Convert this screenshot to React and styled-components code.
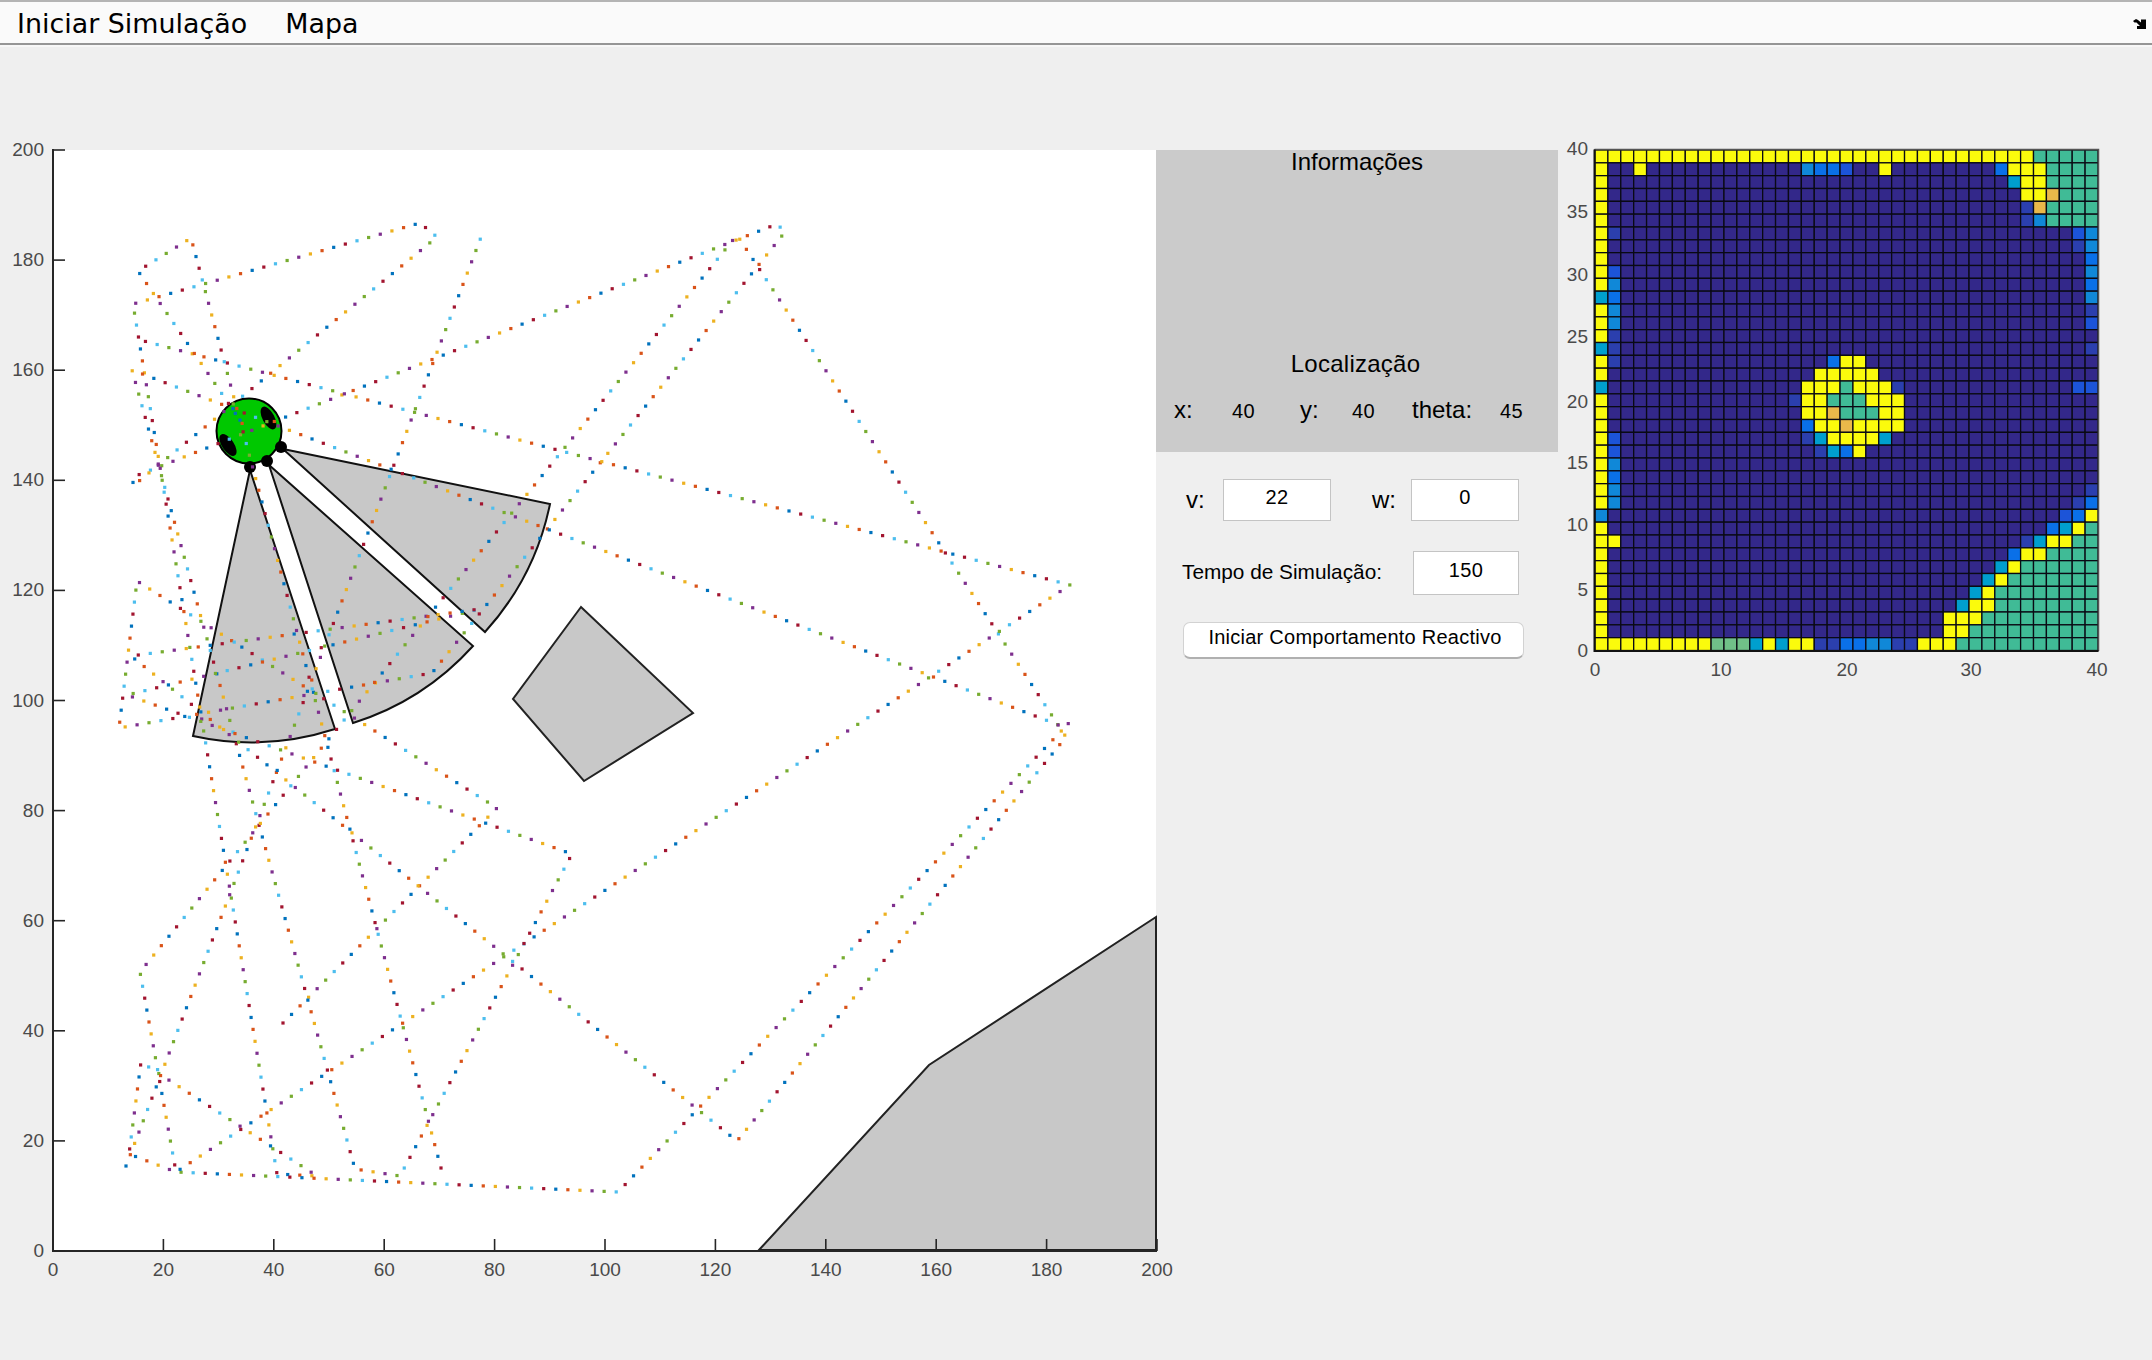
import React from 'react';
import styled, { createGlobalStyle } from 'styled-components';

const GlobalStyle = createGlobalStyle`
  html, body {
    margin: 0;
    padding: 0;
    background: #efefef;
  }
  body {
    width: 2152px;
    height: 1360px;
    overflow: hidden;
    font-family: "Liberation Sans", Arial, sans-serif;
    color: #000;
  }
`;

const MenuBar = styled.nav`
  display: flex;
  align-items: center;
  justify-content: space-between;
  box-sizing: border-box;
  height: 45px;
  padding: 2px 6px 0 17px;
  background: #fafafa;
  border-top: 2px solid #b4b4b4;
  border-bottom: 2px solid #959595;
  box-shadow: 0 2px 0 #f7f7f7;
`;
const MenuItems = styled.div`
  display: flex;
  gap: 38px;
`;
const MenuItem = styled.span`
  font-family: "DejaVu Sans", sans-serif;
  font-size: 26.9px;
`;
const DockIcon = styled.svg`
  display: block;
  width: 13px;
  height: 10px;
`;

const Main = styled.main`
  display: flex;
  align-items: flex-start;
  padding-top: 85px;
`;
const Chart = styled.svg`
  display: block;
  flex: none;
  overflow: visible;
  text {
    font-family: "Liberation Sans", Arial, sans-serif;
    font-size: 19px;
    fill: #4a4a4a;
  }
`;

const SideColumn = styled.section`
  flex: none;
  width: 402px;
  margin-top: 20px;
`;
const InfoPanel = styled.div`
  display: flex;
  flex-direction: column;
  box-sizing: border-box;
  height: 302px;
  padding-bottom: 29px;
  background: #cbcbcb;
`;
const PanelTitle = styled.h2`
  margin: ${p => (p.$last ? 'auto 3px 22px 0' : '0')};
  font-size: 24px;
  font-weight: normal;
  line-height: 24px;
  letter-spacing: ${p => (p.$last ? '0.25px' : '0')};
  text-align: center;
`;
const PositionRow = styled.div`
  display: grid;
  grid-template-columns: 58px 68px 52px 60px 88px auto;
  align-items: baseline;
  padding-left: 18px;
  font-size: 24px;
  line-height: 24px;
`;
const PositionValue = styled.span`
  font-size: 20px;
  letter-spacing: 0.4px;
`;

const ControlRow = styled.div`
  display: flex;
  align-items: center;
  margin-top: ${p => p.$top}px;
  padding-left: ${p => p.$left}px;
`;
const SpeedLabel = styled.span`
  flex: none;
  width: ${p => p.$width}px;
  font-size: 24px;
`;
const TimeLabel = styled.span`
  flex: none;
  width: 231px;
  padding-bottom: 2px;
  font-size: 20.8px;
`;
const Field = styled.div`
  flex: none;
  box-sizing: border-box;
  width: ${p => p.$width}px;
  height: ${p => p.$height}px;
  margin-right: 41px;
  padding-bottom: 5px;
  display: flex;
  align-items: center;
  justify-content: center;
  background: #fff;
  border: 1px solid #c4c4c4;
  font-size: 20px;
  letter-spacing: 0.3px;
`;
const ActionButton = styled.button`
  display: block;
  box-sizing: border-box;
  width: 341px;
  height: 37px;
  margin: 27px 0 0 27px;
  padding: 0 0 5px 3px;
  background: #fff;
  border: 1px solid #d2d2d2;
  border-bottom: 2px solid #b0b0b0;
  border-radius: 7px;
  font-family: "Liberation Sans", Arial, sans-serif;
  font-size: 20px;
  letter-spacing: 0.25px;
  color: #000;
`;

const TRAJECTORY_COLORS = ['#0072bd', '#d95319', '#edb120', '#7e2f8e', '#77ac30', '#4dbeee', '#a2142f'];
const DOT_STEP = 12.1;

// robot path in page pixels, each list is one continuous run of dots
const PATHS = [
  [[283, 1023], [497, 808], [137, 581], [119, 728], [432, 673], [785, 232], [777, 224], [133, 477], [133, 486],
    [437, 237], [420, 223], [133, 304], [277, 1174], [317, 1176], [141, 1062], [129, 1154], [176, 1172],
    [618, 1192], [1069, 723], [1064, 727], [132, 370], [355, 1169], [400, 1176], [572, 854], [127, 695],
    [480, 609], [131, 656], [737, 1141], [1066, 737], [737, 235], [140, 972], [176, 1172], [1070, 585], [140, 340]],
  [[126, 1166], [483, 232]],
  [[441, 1168], [191, 238], [138, 271], [248, 432]],
];

function buildDots() {
  const dots = [];
  let colorIndex = 6;
  PATHS.forEach(path => {
    let carry = 0;
    for (let i = 0; i < path.length - 1; i++) {
      const [x0, y0] = path[i];
      const [x1, y1] = path[i + 1];
      const len = Math.hypot(x1 - x0, y1 - y0);
      let d = carry;
      while (d < len) {
        const t = d / len;
        dots.push({ x: x0 + (x1 - x0) * t, y: y0 + (y1 - y0) * t, color: TRAJECTORY_COLORS[colorIndex % 7] });
        colorIndex++;
        d += DOT_STEP;
      }
      carry = d - len;
    }
  });
  return dots;
}

const TICKS = [0, 20, 40, 60, 80, 100, 120, 140, 160, 180, 200];
const plotX = v => 53 + v * 5.52;
const plotY = v => 1251 - v * 5.505;

function SimulationPlot() {
  return (
    <Chart width="1156" height="1173" viewBox="0 130 1156 1173">
      <rect x="54" y="150" width="1102" height="1100" fill="#fff" />
      {/* obstacles */}
      <polygon points="581,607 513,699 584,781 693,713" fill="#c8c8c8" stroke="#222" strokeWidth="2" />
      <polygon points="759,1250 929,1065 1156,917 1156,1250" fill="#c8c8c8" stroke="#222" strokeWidth="2" />
      {/* sensor cones */}
      <path d="M250 470 L193 736 A272 272 0 0 0 335 729 Z" fill="#c8c8c8" stroke="#111" strokeWidth="2" />
      <path d="M269 465 L353 723 A272 272 0 0 0 473 646 Z" fill="#c8c8c8" stroke="#111" strokeWidth="2" />
      <path d="M283 449 L485 632 A272 272 0 0 0 550 504 Z" fill="#c8c8c8" stroke="#111" strokeWidth="2" />
      {/* robot */}
      <circle cx="249" cy="431" r="32.5" fill="#00c800" stroke="#000" strokeWidth="2" />
      <ellipse cx="268.5" cy="418" rx="12.5" ry="6" transform="rotate(62 268.5 418)" fill="#000" />
      <ellipse cx="228" cy="445" rx="12.5" ry="6" transform="rotate(56 228 445)" fill="#000" />
      <circle cx="250" cy="467" r="6" fill="#000" />
      <circle cx="267" cy="461" r="6" fill="#000" />
      <circle cx="281" cy="447" r="6" fill="#000" />
      {buildDots().map((dot, i) => (
        <rect key={i} x={dot.x - 1.6} y={dot.y - 1.6} width="3.2" height="3.2" fill={dot.color} />
      ))}
      {/* axes */}
      <path d="M53 149 V1251 H1157" fill="none" stroke="#262626" strokeWidth="2" />
      {TICKS.map(t => (
        <g key={t}>
          <line x1="53" x2="65" y1={plotY(t)} y2={plotY(t)} stroke="#262626" strokeWidth="1.6" />
          <line x1={plotX(t)} x2={plotX(t)} y1="1251" y2="1239" stroke="#262626" strokeWidth="1.6" />
          <text x="44" y={plotY(t) + 6} textAnchor="end">{t}</text>
          <text x={plotX(t)} y="1276" textAnchor="middle">{t}</text>
        </g>
      ))}
    </Chart>
  );
}

const NAVY = '#33288a';
const CELL_COLORS = {
  Y: '#fbfb0c',
  T: '#40bb96',
  O: '#e9b84a',
  G: '#70c088',
  a: '#2b3fae',
  b: '#1c54d8',
  c: '#0a70e8',
  d: '#1088d8',
  e: '#009fce',
};

// occupancy grid, top row first: "col" or "from-to" followed by the colour key
const GRID_ROWS = [
  '0-33Y 34-38T',
  '0Y 3Y 16d 17c 18c 19b 22Y 31c 32-34Y 35-38T',
  '0Y 32e 33-34Y 35-38T',
  '0Y 33-34Y 35O 36-38T',
  '0Y 33a 34O 35-38T',
  '0Y 33a 34d 35-38T',
  '0Y 1a 37b 38d',
  '0Y 37a 38d',
  '0Y 38c',
  '0Y 1b 38d',
  '0Y 1d 38c',
  '0e 1c 38d',
  '0Y 1d 38a',
  '0Y 1d 38b',
  '0Y 1a',
  '0e 1a 38a',
  '0Y 1a 18c 19-20Y',
  '0Y 17-21Y',
  '0e 16-18Y 19T 20-22Y 23a 37-38b',
  '0Y 15a 16-17Y 18-20T 21-23Y',
  '0Y 16-17Y 18O 19-21T 22-23Y',
  '0Y 16c 17-18Y 19O 20-23Y',
  '0Y 1b 16a 17e 18-21Y 22e',
  '0Y 1b 17a 18e 19c 20Y',
  '0Y 1d',
  '0Y 1c',
  '0Y 1d 38a',
  '0Y 1d 37a 38c',
  '0d 36b 37c 38Y',
  '0Y 35c 36e 37Y 38T',
  '0-1Y 33a 34e 35-36Y 37-38T',
  '0Y 32c 33-34Y 35-38T',
  '0Y 31e 32Y 33-38T',
  '0Y 30e 31Y 32-38T',
  '0Y 29e 30Y 31-38T',
  '0Y 28e 29-30Y 31-38T',
  '0Y 27-29Y 30-38T',
  '0Y 27-28Y 29-38T',
  '0-8Y 9-11G 12e 13Y 14e 15-16Y 17a 18a 19c 20c 21-22d 23-24a 25-27Y 28-38T',
];

function buildCells() {
  return GRID_ROWS.map(spec => {
    const row = Array(39).fill(NAVY);
    spec.split(' ').forEach(part => {
      const m = part.match(/^(\d+)(?:-(\d+))?(\w)$/);
      const from = Number(m[1]);
      const to = m[2] ? Number(m[2]) : from;
      for (let c = from; c <= to; c++) row[c] = CELL_COLORS[m[3]];
    });
    return row;
  });
}

const MAP_LEFT = 1595;
const MAP_TOP = 150;
const CELL_W = 503 / 39;
const CELL_H = 500.5 / 39;
const MAP_Y_TICKS = [[40, 148], [35, 211], [30, 274], [25, 336], [20, 401], [15, 462], [10, 524], [5, 589], [0, 650]];
const MAP_X_TICKS = [[0, 1595], [10, 1721], [20, 1847], [30, 1971], [40, 2097]];

function OccupancyMap() {
  return (
    <Chart width="594" height="560" viewBox="1558 130 594 560">
      {buildCells().map((row, r) =>
        row.map((fill, c) => (
          <rect
            key={`${r}-${c}`}
            x={MAP_LEFT + c * CELL_W}
            y={MAP_TOP + r * CELL_H}
            width={CELL_W}
            height={CELL_H}
            fill={fill}
            stroke="#0a0a14"
            strokeWidth="1.3"
          />
        ))
      )}
      <path d="M1594.5 149.5 H2098.5 V651" fill="none" stroke="#555" strokeWidth="1.5" />
      <path d="M1594.5 149.5 V651 H2098.5" fill="none" stroke="#111" strokeWidth="2" />
      {MAP_Y_TICKS.map(([label, y]) => (
        <text key={label} x="1588" y={y + 7} textAnchor="end">{label}</text>
      ))}
      {MAP_X_TICKS.map(([label, x]) => (
        <text key={label} x={x} y="676" textAnchor="middle">{label}</text>
      ))}
    </Chart>
  );
}

const App = () => {
  return (
    <>
      <GlobalStyle />
      <MenuBar>
        <MenuItems>
          <MenuItem>Iniciar Simulação</MenuItem>
          <MenuItem>Mapa</MenuItem>
        </MenuItems>
        <DockIcon viewBox="0 0 13 10">
          <path d="M0 2 L3 0 L5 1 L8 3.5 L8 0.5 L13 0.5 V10 H4 V7 H7 L3.5 3.5 L1.5 3.5 Z" fill="#000" />
        </DockIcon>
      </MenuBar>
      <Main>
        <SimulationPlot />
        <SideColumn>
          <InfoPanel>
            <PanelTitle>Informações</PanelTitle>
            <PanelTitle $last>Localização</PanelTitle>
            <PositionRow>
              <span>x:</span>
              <PositionValue>40</PositionValue>
              <span>y:</span>
              <PositionValue>40</PositionValue>
              <span>theta:</span>
              <PositionValue>45</PositionValue>
            </PositionRow>
          </InfoPanel>
          <ControlRow $top={27} $left={30}>
            <SpeedLabel $width={37}>v:</SpeedLabel>
            <Field $width={108} $height={42}>22</Field>
            <SpeedLabel $width={39}>w:</SpeedLabel>
            <Field $width={108} $height={42}>0</Field>
          </ControlRow>
          <ControlRow $top={30} $left={26}>
            <TimeLabel>Tempo de Simulação:</TimeLabel>
            <Field $width={106} $height={44}>150</Field>
          </ControlRow>
          <ActionButton>Iniciar Comportamento Reactivo</ActionButton>
        </SideColumn>
        <OccupancyMap />
      </Main>
    </>
  );
};

export default App;
